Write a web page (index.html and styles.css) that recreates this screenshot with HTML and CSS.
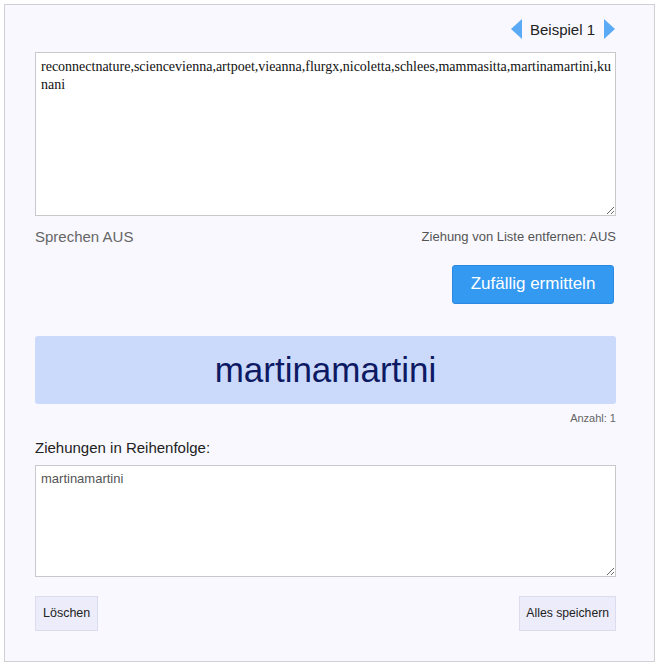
FILE: index.html
```html
<!DOCTYPE html>
<html lang="de">
<head>
<meta charset="utf-8">
<title>Zufallsauswahl</title>
<link rel="stylesheet" href="styles.css">
</head>
<body>
<div class="panel">
  <div class="nav">
    <svg class="arrow" width="11" height="20" viewBox="0 0 11 20"><polygon points="11,0 11,20 0,10" fill="#5aaaf5"/></svg>
    <span class="nav-label">Beispiel 1</span>
    <svg class="arrow" width="11" height="20" viewBox="0 0 11 20"><polygon points="0,0 0,20 11,10" fill="#5aaaf5"/></svg>
  </div>
  <textarea class="list" spellcheck="false">reconnectnature,sciencevienna,artpoet,vieanna,flurgx,nicoletta,schlees,mammasitta,martinamartini,kunani</textarea>
  <div class="options">
    <span class="speak">Sprechen AUS</span>
    <span class="remove">Ziehung von Liste entfernen: AUS</span>
  </div>
  <div class="action">
    <button class="draw">Zufällig ermitteln</button>
  </div>
  <div class="result">martinamartini</div>
  <div class="count">Anzahl: 1</div>
  <div class="history-label">Ziehungen in Reihenfolge:</div>
  <textarea class="history" spellcheck="false">martinamartini</textarea>
  <div class="footer">
    <button class="small">Löschen</button>
    <button class="small save">Alles speichern</button>
  </div>
</div>
</body>
</html>
```
FILE: styles.css
```css
html, body {
  margin: 0;
  padding: 0;
  background: #ffffff;
}
body {
  font-family: "Liberation Sans", Arial, sans-serif;
}
.panel {
  margin: 4px 2px 0 4px;
  border: 1px solid #cfcfd4;
  background: #f8f8fe;
  padding: 14px 38px 30px 30px;
  height: 612px;
  box-sizing: content-box;
  display: flex;
  flex-direction: column;
}
.nav {
  display: flex;
  justify-content: flex-end;
  align-items: center;
  height: 20px;
  margin-bottom: 13px;
  padding-right: 1px;
}
.nav-label {
  font-family: "Liberation Sans", Arial, sans-serif;
  font-size: 15px;
  color: #222;
  margin: 0 9px 0 8px;
}
.arrow {
  display: block;
}
textarea {
  display: block;
  width: 100%;
  box-sizing: border-box;
  border: 1px solid #c9c9cc;
  background: #fff;
  margin: 0;
  resize: vertical;
  outline: none;
  flex: none;
}
.list {
  height: 164px;
  font-family: "Liberation Serif", "Times New Roman", serif;
  font-size: 14px;
  line-height: 18px;
  color: #111;
  padding: 5px 3px 5px 5px;
}
.options {
  display: flex;
  justify-content: space-between;
  align-items: center;
  height: 22px;
  margin-top: 10px;
}
.speak {
  font-size: 15px;
  color: #666;
}
.remove {
  font-size: 13px;
  color: #555;
}
.action {
  display: flex;
  justify-content: flex-end;
  margin-top: 17px;
  padding-right: 2px;
}
.draw {
  width: 162px;
  height: 39px;
  background: #3399f1;
  border: 1px solid #2b8ae0;
  border-radius: 3px;
  color: #fff;
  font-family: "Liberation Sans", Arial, sans-serif;
  font-size: 17px;
  padding: 0;
}
.result {
  margin-top: 32px;
  height: 68px;
  flex: none;
  background: #cbd9fb;
  border-radius: 3px;
  display: flex;
  align-items: center;
  justify-content: center;
  font-size: 35px;
  color: #0d1a63;
}
.count {
  text-align: right;
  font-size: 11px;
  color: #666;
  margin-top: 8px;
  height: 13px;
}
.history-label {
  font-size: 15px;
  color: #222;
  margin-top: 15px;
  height: 18px;
}
.history {
  margin-top: 8px;
  height: 112px;
  font-family: "Liberation Sans", Arial, sans-serif;
  font-size: 13px;
  line-height: 16px;
  color: #555;
  padding: 5px 5px;
}
.footer {
  display: flex;
  justify-content: space-between;
  margin-top: 19px;
}
.small {
  height: 35px;
  padding: 0 7px;
  background: #ececfa;
  border: 1px solid #dcdcef;
  border-radius: 0;
  font-family: "Liberation Sans", Arial, sans-serif;
  font-size: 12.5px;
  color: #222;
}
.save {
  padding: 0 6px;
  font-size: 12.2px;
}
```
